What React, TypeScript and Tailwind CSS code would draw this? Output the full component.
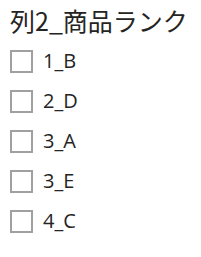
const ITEMS = ["1_B", "2_D", "3_A", "3_E", "4_C"];

export default function App() {
  return (
    <div className="h-[257px] w-[201px] bg-white pl-[10px] text-[#252423]" style={{ fontFamily: '"Open Sans", "Noto Sans CJK JP", sans-serif' }}>
      <div className="h-[41px] pt-[3px] text-[25px] leading-[34px] whitespace-nowrap" style={{ fontFamily: '"Noto Sans CJK JP", sans-serif' }}>
        列2_商品ランク
      </div>
      <ul className="flex flex-col">
        {ITEMS.map((item) => (
          <li key={item} className="flex h-[40px] items-center gap-[10px]">
            <span className="block h-[23px] w-[23px] border-2 border-[#a0a0a0] bg-white" />
            <span className="text-[20px] leading-none">{item}</span>
          </li>
        ))}
      </ul>
    </div>
  );
}
